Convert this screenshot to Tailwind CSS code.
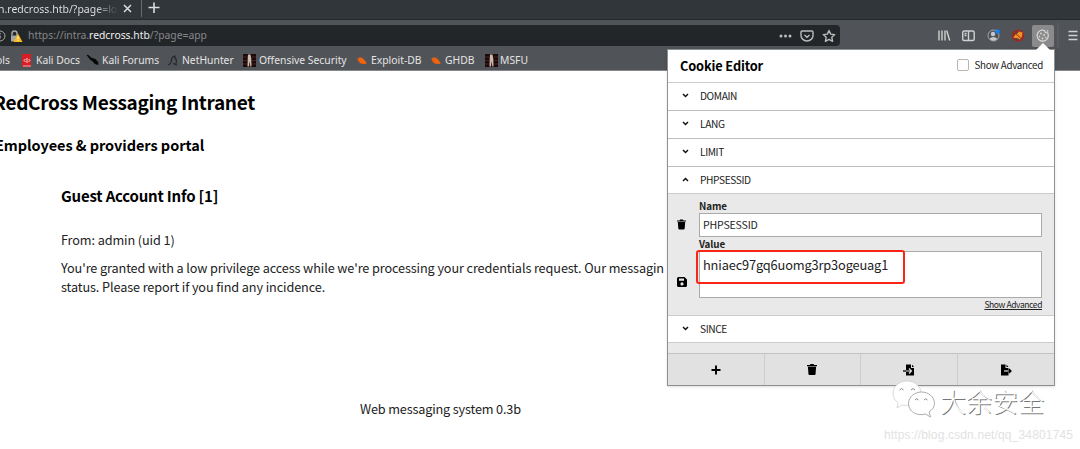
<!DOCTYPE html>
<html lang="en">
<head>
<meta charset="utf-8">
<title>RedCross Messaging Intranet</title>
<script src="https://cdn.jsdelivr.net/npm/@tailwindcss/browser@4"></script>
</head>
<body class="relative flex h-[449px] w-[1080px] flex-col overflow-hidden bg-white font-['Noto_Sans_CJK_SC',sans-serif] text-[#222]">

<svg class="hidden">
  <defs>
    <g id="bug"><path d="M1.500 4.500C3 3 5.500 3 7.500 5l3 3.500-1 1.500-4-.3C3 9 2 7 1.500 4.500z" fill="#f0640f"/><path d="M1 5.500l2 0M2.500 8l2-1M6 3.500l1-1M10 8.500l1 1.500" stroke="#b9521c" stroke-width=".6"/></g>
    <g id="brick"><path d="M0 0h13v13H0z" fill="#1c0a0a"/><path d="M0 3h4M9 3h4M0 6.500h4M9 6.500h4M0 10h4M9 10h4" stroke="#4b2020" stroke-width="1.200"/><path d="M5 .500h2.500l.8 4 .2 8H7.300L6.700 7 6 12.500H4.500l.2-8z" fill="#cbb9ae"/></g>
    <g id="trash"><path d="M0 1h3l1-1h3l1 1h3v1.300H0zM1 3h9l-.6 8q-.1 1-1 1H2.600q-1 0-1-1z"/></g>
  </defs>
</svg>

<header class="flex h-[71px] shrink-0 flex-col font-['Noto_Sans',sans-serif] text-[11px] text-[#e4e4e5]">
  <div class="flex h-5 items-start border-b border-[#26282b] bg-[#31363b]">
    <div class="flex h-[17px] w-[142px] items-center overflow-hidden border-r border-[#686b6e]">
      <div class="-ml-[2px] w-[121px] bg-linear-to-r from-[#e8e8e8] from-80% to-[#31363b] bg-clip-text text-[10.500px] leading-[16px] whitespace-nowrap text-transparent">n.redcross.htb/?page=log</div>
      <svg class="ml-[4px]" width="9" height="9" viewBox="0 0 9 9"><path d="M1 1l7 7M8 1L1 8" stroke="#dcdddd" stroke-width="1.500"/></svg>
    </div>
    <svg class="mt-[2px] ml-[6px]" width="12" height="12" viewBox="0 0 12 12"><path d="M6 .500v10.500M.500 5.500h11" stroke="#dcdddd" stroke-width="1.600"/></svg>
  </div>
  <div class="flex h-[30px] items-center bg-[#505357]">
    <div class="mt-px flex h-[21px] w-[840px] items-center rounded-r-sm bg-[#232629]">
      <svg width="23" height="14" viewBox="0 0 23 14"><circle cx="0" cy="7" r="5" fill="none" stroke="#a5a6a7"/><path d="M0 6.500v3M0 4v1.300" stroke="#a5a6a7" stroke-width="1.400"/><path d="M12 6.500V4.500a2.500 2.500 0 015 0v3" fill="none" stroke="#a5a6a7" stroke-width="1.500"/><path d="M11 6.500h7v6h-7z" fill="#a5a6a7"/><path d="M18 4.500l4.500 8.500h-9z" fill="#fbb81b"/><path d="M18 7.500v2.800M18 11.200v1" stroke="#fff"/></svg>
      <div class="mt-px ml-[5px] flex-1 text-[10.350px] whitespace-nowrap text-[#85878a]">https://intra.<span class="text-[#eee]">redcross.htb</span>/?page=app</div>
      <svg class="mr-[4px]" width="58" height="14" viewBox="0 0 58 14" fill="none" stroke="#babbbc" stroke-width="1.400"><g fill="#babbbc" stroke="none"><circle cx="3" cy="7" r="1.500"/><circle cx="7.500" cy="7" r="1.500"/><circle cx="12" cy="7" r="1.500"/></g><path d="M24 2h10q1 0 1 1v3.500a6 5.500 0 01-12 0V3q0-1 1-1zM26.500 6l2.500 2.300L31.500 6"/><path d="M51 1.500l1.700 3.600 4 .5-2.900 2.700.8 4-3.600-2-3.600 2 .8-4-2.900-2.700 4-.5z" stroke-linejoin="round"/></svg>
    </div>
    <svg class="ml-[97px]" width="143" height="30" viewBox="937 20 143 30" fill="none" stroke="#d0d1d2" stroke-width="1.400"><path d="M939 30.500v10M942 30.500v10M945 30.500v10M946.700 30.500l3 10"/><rect x="962.700" y="31" width="11.500" height="9.500" rx="1.500"/><path d="M968.500 31v9.500M964.500 33.500h2M964.500 35.500h2"/><circle cx="993.500" cy="35.500" r="5.500" stroke="#a5a7a9" stroke-width="1"/><circle cx="993" cy="34" r="2.200" fill="#c7c8c9" stroke="none"/><path d="M989.500 39q3.500-4 8 0-4 3.500-8 0z" fill="#c7c8c9" stroke="none"/><circle cx="997.500" cy="31.500" r="2.200" fill="#0a84ff" stroke="none"/><circle cx="1018" cy="35.500" r="5.500" stroke="#b91d18" stroke-width="1.200" fill="#634036"/><path d="M1013.500 38q1-4 4-4.500l1.500-2 3.500 1-.5 4-2 3-3-1.500z" fill="#ef9226" stroke="none"/><path d="M1014 32l8 7.500" stroke="#b91d18" stroke-width="1"/><rect x="1032" y="25" width="22" height="22" rx="2" fill="#8a8a8b" stroke="none"/><path d="M1042 30a5.600 5.600 0 106.300 5.500l-.5-2.500-2.500-.5-.8-2z" stroke="#dedede" stroke-width="1.100"/><g fill="#dedede" stroke="none"><circle cx="1041" cy="33.500" r=".9"/><circle cx="1039.500" cy="36.500" r=".8"/><circle cx="1044" cy="35" r=".9"/><circle cx="1042.500" cy="38.500" r=".9"/><circle cx="1045.700" cy="37.500" r=".8"/><circle cx="1047.500" cy="31" r=".8"/></g><path d="M1058 23v25" stroke="#626467" stroke-width="1"/><path d="M1068.500 31.500h9M1068.500 35.500h9M1068.500 39.500h9" stroke-width="1.500"/></svg>
  </div>
  <div class="flex h-[21px] items-center border-b border-[#85878a] bg-[#505357] text-[10.350px] whitespace-nowrap [&>span]:mt-px">
    <span class="w-[21px] -indent-[4px]">ols</span>
    <svg width="15" height="13" viewBox="0 0 15 13"><path d="M1 0h9v13H1z" fill="#d61f25"/><path d="M2 12h8" stroke="#eee" stroke-width=".7"/><path d="M4.500 5l-1.500 1.500 1.500 1.500M7.500 5l1.500 1.500-1.500 1.500M6 4v5" stroke="#fff" fill="none" stroke-width=".8"/></svg>
    <span class="w-[50px]">Kali Docs</span>
    <svg width="16" height="13" viewBox="0 0 16 13"><path d="M.500 1l1.500-.3 3.500 3 4 1.300 3 3.500-.5 2.500-3-1-3-3-2-1.500z" fill="#080808"/></svg>
    <span class="w-[65px]">Kali Forums</span>
    <svg width="15" height="13" viewBox="0 0 15 13"><path d="M1 11q3-1 3.500-5t4-4l-1.500.7q4 3 1.500 8M6 9.500l4 1.500" stroke="#24272a" fill="none" stroke-width="1.200"/></svg>
    <span class="w-[61px]">NetHunter</span>
    <svg width="16" height="13" viewBox="0 0 16 13"><use href="#brick"/></svg>
    <span class="w-[97px]">Offensive Security</span>
    <svg width="15" height="13" viewBox="0 0 15 13"><use href="#bug"/></svg>
    <span class="w-[59px]">Exploit-DB</span>
    <svg width="15" height="13" viewBox="0 0 15 13"><use href="#bug"/></svg>
    <span class="w-[40px]">GHDB</span>
    <svg width="15" height="13" viewBox="0 0 15 13"><use href="#brick"/></svg>
    <span>MSFU</span>
  </div>
</header>

<main class="flex flex-col whitespace-nowrap text-black">
  <h1 class="mt-[16px] -ml-[7px] text-[19px] leading-[30px] font-bold tracking-[-0.3px]">RedCross Messaging Intranet</h1>
  <h2 class="mt-[16px] -ml-[5px] text-[14.500px] leading-[24px] font-bold tracking-[-0.050px]">Employees &amp; providers portal</h2>
  <section class="ml-[61px] text-[12.700px] tracking-[-0.110px] text-[#222]">
    <h3 class="mt-[27px] text-[15px] leading-[24px] font-bold tracking-[-0.2px] text-black">Guest Account Info [1]</h3>
    <p class="mt-[22px] leading-[19px]">From: admin (uid 1)</p>
    <p class="mt-[9px] w-[606px] overflow-hidden leading-[19px]">You're granted with a low privilege access while we're processing your credentials request. Our messagin<br>status. Please report if you find any incidence.</p>
  </section>
  <footer class="mt-[103px] ml-[360px] text-[12.700px] leading-[19px] tracking-[-0.160px] text-[#222]">Web messaging system 0.3b</footer>
</main>

<aside class="absolute top-[49px] left-[667px] flex h-[337px] w-[388px] flex-col border border-[#8e9192] bg-[#e9e9e9] text-[10.200px] tracking-[-0.4px] shadow-sm">
  <svg class="absolute -top-[7px] left-[367px]" width="16" height="8" viewBox="0 0 16 8"><path d="M0 8l8-8 8 8z" fill="#fff"/></svg>
  <div class="flex h-[33px] shrink-0 items-center justify-between border-b border-[#ccc] bg-white pr-[11px] pl-[12px]">
    <h2 class="text-[12.800px] font-bold tracking-[-0.150px] text-black">Cookie Editor</h2>
    <label class="flex items-center gap-[5px] pb-[2px] text-[9.800px] leading-[14px] tracking-[-0.3px]"><span class="size-[12px] rounded-[2px] border border-[#bbb5ae] bg-white"></span>Show Advanced</label>
  </div>
  <div class="flex h-[28px] shrink-0 items-center border-b border-[#bdbdbd] bg-white pb-[2px]"><svg class="mr-[11px] ml-[14px]" width="7" height="6" viewBox="0 0 7 6"><path d="M1 1l2.500 2.500L6 1" fill="none" stroke="#111" stroke-width="1.500"/></svg><span>DOMAIN</span></div>
  <div class="flex h-[28px] shrink-0 items-center border-b border-[#bdbdbd] bg-white pb-[2px]"><svg class="mr-[11px] ml-[14px]" width="7" height="6" viewBox="0 0 7 6"><path d="M1 1l2.500 2.500L6 1" fill="none" stroke="#111" stroke-width="1.500"/></svg><span>LANG</span></div>
  <div class="flex h-[28px] shrink-0 items-center border-b border-[#bdbdbd] bg-white pb-[2px]"><svg class="mr-[11px] ml-[14px]" width="7" height="6" viewBox="0 0 7 6"><path d="M1 1l2.500 2.500L6 1" fill="none" stroke="#111" stroke-width="1.500"/></svg><span>LIMIT</span></div>
  <div class="flex h-[27px] shrink-0 items-center border-b border-[#ccc] bg-white pb-px"><svg class="mr-[11px] ml-[14px]" width="7" height="6" viewBox="0 0 7 6"><path d="M1 4l2.500-2.500L6 4" fill="none" stroke="#111" stroke-width="1.500"/></svg><span>PHPSESSID</span></div>
  <div class="flex h-[121px] shrink-0">
    <div class="flex w-[31px] flex-col pl-[9px]">
      <svg class="mt-[25px]" width="9" height="11" viewBox="0 0 11 12"><use href="#trash"/></svg>
      <svg class="mt-[47px]" width="10" height="10" viewBox="0 0 10 10"><path fill-rule="evenodd" d="M1.500 0h6L10 2.500v6Q10 10 8.500 10h-7Q0 10 0 8.500v-7Q0 0 1.500 0zM2 1.500v2.200h5V1.500zM5 5.300a1.600 1.600 0 100 3.200 1.600 1.600 0 000-3.200z"/></svg>
    </div>
    <div class="flex w-[343px] flex-col">
      <b class="mt-[6px] text-[9.800px] leading-[13px] tracking-[-0.1px] text-[#222]">Name</b>
      <div class="flex h-[24px] items-center border border-[#aaa] bg-white pl-[3px] text-[10.600px] tracking-[-0.2px]">PHPSESSID</div>
      <b class="text-[9.800px] leading-[14px] tracking-[-0.1px] text-[#222]">Value</b>
      <div class="h-[47px] border border-[#aaa] bg-white pt-[3px] pl-[3px] text-[12.800px] leading-[20px] tracking-[-0.150px]">hniaec97gq6uomg3rp3ogeuag1</div>
      <a class="self-end text-[8.500px] leading-[12px] tracking-[-0.4px] underline">Show Advanced</a>
    </div>
  </div>
  <div class="flex h-[28px] shrink-0 items-center border-y border-[#ccc] bg-white pb-px"><svg class="mr-[11px] ml-[14px]" width="7" height="6" viewBox="0 0 7 6"><path d="M1 1l2.500 2.500L6 1" fill="none" stroke="#111" stroke-width="1.500"/></svg><span>SINCE</span></div>
  <div class="mt-auto grid h-[32px] grid-cols-4 divide-x divide-[#ccc] border-t border-[#c2c2c2] bg-[#e1e1e1]">
    <div class="flex items-center justify-center"><svg width="10" height="10" viewBox="0 0 10 10"><path d="M5 .500v9M.500 5h9" stroke="#000" stroke-width="1.900"/></svg></div>
    <div class="flex items-center justify-center"><svg width="10" height="11" viewBox="0 0 11 12"><use href="#trash"/></svg></div>
    <div class="flex items-center justify-center"><svg width="12" height="12" viewBox="0 0 12 12"><path d="M3 .500h5V4h3v7.500H3z"/><path d="M9 .500l2 2.500H9z"/><path d="M3 7h5M6 4.500L8.500 7 6 9.500" stroke="#e1e1e1" stroke-width="1.200" fill="none"/><path d="M0 7h3" stroke="#000" stroke-width="1.300"/></svg></div>
    <div class="flex items-center justify-center"><svg width="12" height="12" viewBox="0 0 12 12"><path d="M1 .500h4.500V4H8.500v7.500H1z"/><path d="M6.500 .500l2 2.500h-2z"/><path d="M4 7h4.500" stroke="#e1e1e1" stroke-width="1.200"/><path d="M8.500 7h2.500M9 5l2 2-2 2" stroke="#000" stroke-width="1.300" fill="none"/></svg></div>
  </div>
</aside>

<div class="absolute top-[250px] left-[696px] h-[34px] w-[209px] rounded-[3px] border-2 border-[#fb2516]"></div>

<div class="absolute top-[379px] left-[890px] flex items-start">
  <svg width="48" height="40" viewBox="890 380 48 40"><g fill="#fff" stroke="#aaa" stroke-width=".7"><path d="M907 382c-8 0-14 5.500-14 12.500 0 4 2 7 5 9.500l-1 5 5-3c10 2 19-3 19-11.500 0-7-6-12.500-14-12.500z" stroke="#ccc"/><path d="M921.500 393c-7 0-13 5-13 11.500 0 8 8 13 17 10.500l5 3-1.500-5c3-2 5.500-5 5.500-8.500 0-6.500-6-11.500-13-11.500z" stroke="#888"/></g><path d="M899.500 391q2-3 4 0M911 391q2-3 4 0M915 401q1.700-2.500 3.500 0M924 401q1.700-2.500 3.500 0" fill="none" stroke="#888"/></svg>
  <span class="ml-[2px] text-[26px] leading-[44px] font-light whitespace-nowrap text-white [text-shadow:1px_1px_0.5px_#777]">大余安全</span>
</div>
<div class="absolute top-[427px] left-[884px] font-['Liberation_Sans',sans-serif] text-[12px] leading-[16px] tracking-[0.150px] whitespace-nowrap text-[#e2e2e2]">https://blog.csdn.net/qq_34801745</div>
</body>
</html>
